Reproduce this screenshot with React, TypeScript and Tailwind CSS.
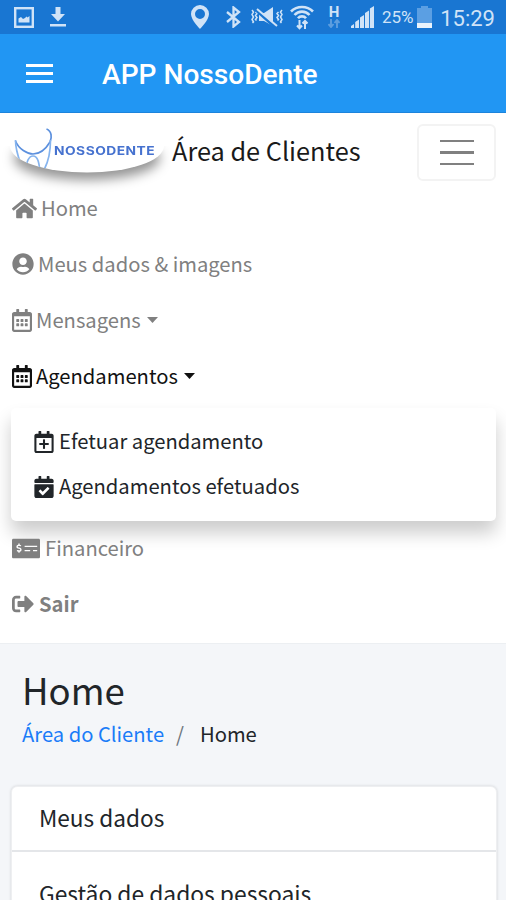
import type { ReactNode } from "react";
import {
  FaCalendarCheck,
  FaHome,
  FaMoneyCheckAlt,
  FaRegCalendarAlt,
  FaRegCalendarPlus,
  FaSignOutAlt,
  FaUserCircle,
} from "react-icons/fa";

type NavItemProps = {
  icon: ReactNode;
  label: string;
  active?: boolean;
  bold?: boolean;
  caret?: boolean;
};

function StatusBar() {
  return (
    <div className="flex h-[34px] items-center bg-[#1976d2] pr-[11px] pl-[14px] font-[Roboto,sans-serif] text-[#d0e3f7]">
      <svg className="h-[21px] w-5 shrink-0" viewBox="0 0 20 21" fill="none">
        <rect x="1.2" y="1.2" width="17.6" height="18.6" stroke="currentColor" strokeWidth="2.4" />
        <path d="M4.500 15.500v-4l2.500-1.500 2 2 2-1 1.500-1.500 1 1 2-1.500v6.500z" fill="currentColor" />
      </svg>
      <svg className="ml-4 h-5 w-4 shrink-0" viewBox="0 0 16 20" fill="currentColor">
        <path d="M5.500 0h5v7H15l-7 7.500L1 7h4.500zM0 17h16v2.500H0z" />
      </svg>
      <svg className="ml-[125px] h-6 w-[18px] shrink-0" viewBox="0 0 18 24" fill="currentColor">
        <path
          fillRule="evenodd"
          d="M9 0a9 9 0 0 0-9 9c0 6 9 15 9 15s9-9 9-15a9 9 0 0 0-9-9zm0 4a5 5 0 1 1 0 10A5 5 0 0 1 9 4z"
        />
      </svg>
      <svg className="ml-[17px] h-[22px] w-[15px] shrink-0" viewBox="0 0 15 22" fill="none" stroke="currentColor" strokeWidth="2.300">
        <path d="M1 6l12 10-5.500 4.500v-19L13 6 1 16" />
      </svg>
      <svg className="ml-[10px] h-[22px] w-[32px] shrink-0" viewBox="0 0 32 22">
        <g fill="none" stroke="currentColor" strokeWidth="1.500">
          <path d="M1 4l1.500 2L1 8.500 2.500 11 1 13.500 2.500 16 1.500 17M4.500 6L6 7.500l-1.500 2 1.500 2-1.500 2 1 1" />
          <path d="M31 4l-1.500 2L31 8.500 29.500 11l1.500 2.500-1.500 2.500 1 1M27.500 6L26 7.500l1.500 2-1.500 2 1.500 2-1 1" />
        </g>
        <path d="M8 7h5l9-6v19l-9-5H8z" fill="currentColor" />
        <path d="M6 5l19 17" stroke="#1976d2" strokeWidth="3" />
        <path d="M6 3l20 17" stroke="currentColor" strokeWidth="2" />
      </svg>
      <svg className="ml-[7px] h-[25px] w-6 shrink-0" viewBox="0 0 24 25" fill="none" stroke="currentColor" strokeWidth="2.600">
        <path d="M1 6.500c6-6 16-6 22 0M4.500 10c4-4.500 11-4.500 15 0M8 13.200c2-2.500 6-2.500 8 0" />
        <path d="M9.500 15v8M7 20.500l2.500 2.700 2.500-2.700M15 24v-8M12.500 18.500L15 16l2.500 2.500" strokeWidth="2" />
      </svg>
      <div className="ml-[14px] flex h-6 w-3 shrink-0 flex-col items-center">
        <span className="text-[15px] leading-[14px] font-bold">H</span>
        <svg className="h-[9px] w-3 text-[#5d9edf]" viewBox="0 0 12 9" fill="none" stroke="currentColor" strokeWidth="1.900">
          <path d="M3 0v8M.5 5L3 8l2.500-3M9 9V1M6.500 4L9 1l2.500 3" />
        </svg>
      </div>
      <svg className="ml-[11px] h-[22px] w-[23px] shrink-0" viewBox="0 0 23 22" fill="currentColor">
        <path d="M0 22v-2l3-2v4zM4.200 22v-6L8 13.500V22zM9 22V11.500L13 9v13zM14 22V7l4-2.500V22zM18.900 22V2.500L23 0v22z" />
      </svg>
      <span className="ml-2 w-[32px] shrink-0 pt-px text-[17px] leading-none whitespace-nowrap">25%</span>
      <svg className="ml-[3px] h-[22px] w-[15px] shrink-0" viewBox="0 0 15 22">
        <path d="M4 0h7v2h4v20H0V2h4z" fill="#5b9fe3" />
        <path d="M0 17h15v5H0z" fill="#eaf3fc" />
      </svg>
      <span className="ml-auto pt-[3px] text-[22px] leading-none">15:29</span>
    </div>
  );
}

function AppBar() {
  return (
    <header className="flex h-[79px] items-center border-b border-[#1c84dc] bg-[#2196f3] pl-[26px] text-white">
      <div className="flex w-[27px] flex-col gap-[5px]">
        <span className="h-[3px] bg-white" />
        <span className="h-[3px] bg-white" />
        <span className="h-[3px] bg-white" />
      </div>
      <h1 className="ml-[49px] pt-1 font-[Roboto,sans-serif] text-[28.100px] leading-none font-medium">
        APP NossoDente
      </h1>
    </header>
  );
}

function Logo() {
  return (
    <div className="relative h-[64px] w-[153px]">
      <svg className="h-full w-full overflow-visible" viewBox="0 0 153 64" fill="none">
        <defs>
          <filter id="soft" x="-20%" y="-60%" width="140%" height="260%">
            <feGaussianBlur stdDeviation="6" />
          </filter>
          <clipPath id="below">
            <path d="M-11 18h180v70H-11z" />
          </clipPath>
          <clipPath id="plate">
            <ellipse cx="76" cy="18" rx="77" ry="26.500" />
          </clipPath>
        </defs>
        <g clipPath="url(#below)">
          <ellipse cx="76" cy="30" rx="73" ry="22" fill="#000" fillOpacity=".42" filter="url(#soft)" />
        </g>
        <ellipse cx="76" cy="18" rx="77" ry="26.500" fill="#fff" />
        <g strokeWidth="1.700">
          <path
            d="M4.500 13c3 8 12 13 17.500 13 8 0 14-7 17-12 2-4 2-11-3.500-13"
            stroke="#5c90de"
          />
          <g stroke="#86b4ee" clipPath="url(#plate)">
            <path d="M4.500 12c0 8 2 15 5 23M39.500 12c0 10-2 21-6 29" />
            <path d="M15 41c0-7 3-13 7-13 5 0 6 7 7 15" />
          </g>
        </g>
      </svg>
      <span className="absolute top-[16px] left-[43px] origin-left scale-x-[1.200] font-[Inter,sans-serif] text-[11.500px] leading-[14px] font-bold tracking-[0.400px] text-[#4672cf]">
        NOSSODENTE
      </span>
    </div>
  );
}

function NavItem({ icon, label, active = false, bold = false, caret = false }: NavItemProps) {
  return (
    <li
      className={`flex h-14 items-center text-[20.200px] leading-none ${
        active ? "text-[#111111]" : "text-[#808080]"
      } ${bold ? "font-bold" : ""}`}
    >
      {icon}
      <span>{label}</span>
      {caret ? (
        <svg className="ml-[6px] h-[6px] w-[11px]" viewBox="0 0 11 6" fill="currentColor">
          <path d="M0 0h11L5.500 6z" />
        </svg>
      ) : null}
    </li>
  );
}

function DropdownItem({ icon, label }: { icon: ReactNode; label: string }) {
  return (
    <li className="flex h-[45px] items-center text-[20.200px] leading-none text-[#212529]">
      {icon}
      <span>{label}</span>
    </li>
  );
}

export default function App() {
  return (
    <div className="h-[900px] w-full overflow-hidden bg-[#f4f6f9] font-['Noto_Sans_CJK_SC',sans-serif]">
      <StatusBar />
      <AppBar />

      <nav className="h-[531px] border-b border-[#eceff2] bg-white pr-[10px] pl-[11px]">
        <div className="flex h-[67px] items-start pt-[11px]">
          <div className="pt-[4px]">
            <Logo />
          </div>
          <span className="ml-2 pt-[13px] text-[25.300px] leading-[26px] text-[#1a1a1a]">Área de Clientes</span>
          <button
            type="button"
            className="ml-auto flex h-[57px] w-[79px] flex-col items-center justify-center gap-[9px] rounded-md border-2 border-[#f3f3f3]"
          >
            <span className="h-[2.500px] w-[34px] bg-[#808080]" />
            <span className="h-[2.500px] w-[34px] bg-[#808080]" />
            <span className="h-[2.500px] w-[34px] bg-[#808080]" />
          </button>
        </div>

        <ul className="pl-px">
          <NavItem icon={<FaHome className="mr-1 h-[23px] w-[25px]" />} label="Home" />
          <NavItem icon={<FaUserCircle className="mr-1 size-[22px]" />} label="Meus dados & imagens" />
          <NavItem icon={<FaRegCalendarAlt className="mr-1 h-[23px] w-[20px]" />} label="Mensagens" caret />
          <NavItem icon={<FaRegCalendarAlt className="mr-1 h-[23px] w-[20px]" />} label="Agendamentos" active caret />
        </ul>

        <ul className="mt-[4px] h-[113px] rounded-[5px] bg-white px-[23px] pt-[11px] shadow-[0_12px_18px_rgba(0,0,0,0.200)]">
          <DropdownItem
            icon={<FaRegCalendarPlus className="mr-[5px] h-[22px] w-[20px]" />}
            label="Efetuar agendamento"
          />
          <DropdownItem
            icon={<FaCalendarCheck className="mr-[5px] h-[22px] w-[20px]" />}
            label="Agendamentos efetuados"
          />
        </ul>

        <ul className="-mt-px pl-px">
          <NavItem icon={<FaMoneyCheckAlt className="mr-[5px] h-[23px] w-[28px]" />} label="Financeiro" />
          <NavItem icon={<FaSignOutAlt className="mr-[5px] size-[22px]" />} label="Sair" bold />
        </ul>
      </nav>

      <main className="pt-[26px] pr-[9px] pl-[11px]">
        <div className="px-[11px]">
          <h2 className="text-[36.500px] leading-[40px] text-[#212529]">Home</h2>
          <div className="mt-[12px] flex text-[20.200px] leading-[24px]">
            <a className="text-[#1a7cf8]">Área do Cliente</a>
            <span className="ml-[12px] text-[#6c757d]">/</span>
            <span className="ml-[16px] text-[#212529]">Home</span>
          </div>
        </div>

        <section className="mt-[40px] h-[160px] rounded-[6px] border border-[#eeeff1] bg-white text-[22.600px] text-[#212529] shadow-[0_0_3px_rgba(0,0,0,0.150)]">
          <h3 className="flex h-[65px] items-center border-b-2 border-[#e4e6e9] px-[27px] leading-none">Meus dados</h3>
          <p className="px-[27px] pt-[30px] text-[22.800px] leading-[24px]">Gestão de dados pessoais</p>
        </section>
      </main>
    </div>
  );
}
